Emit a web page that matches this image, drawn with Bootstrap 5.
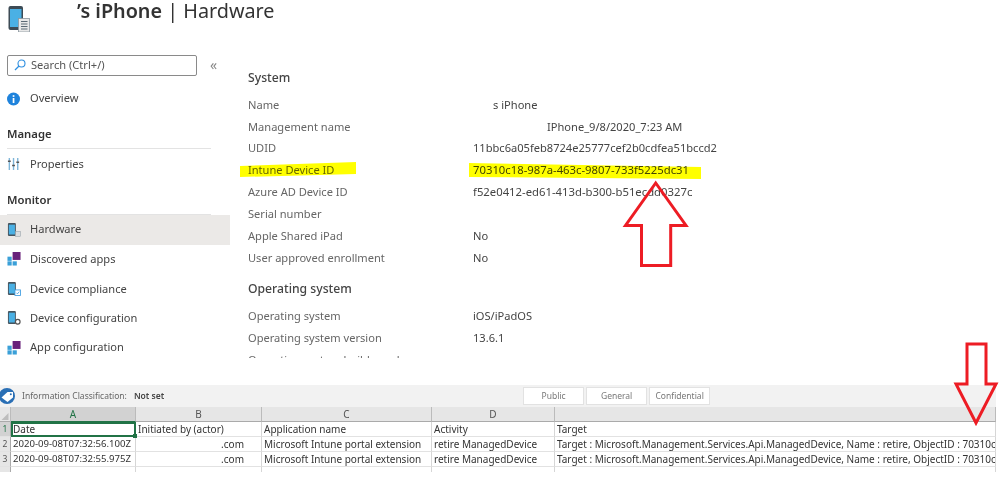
<!DOCTYPE html>
<html lang="en">
<head>
<meta charset="utf-8">
<title>iPhone | Hardware</title>
<link href="https://cdn.jsdelivr.net/npm/bootstrap@5.3.0/dist/css/bootstrap.min.css" rel="stylesheet">
<style>
html,body{height:485px;overflow:hidden;background:#fff}
body{font-family:"Noto Sans","Open Sans",sans-serif;color:#444;position:relative;width:1000px}
.portal{height:385px;overflow:hidden}
.page-head{height:48px;padding:0 0 0 8px;gap:47px}
.head-icon{flex:none;margin-top:6px}
.page-title{font-size:19.8px;line-height:21px;font-weight:400;color:#333;margin:0;white-space:nowrap}
.page-title b{font-weight:600}
.side{width:230px;flex:none}
.side-search{padding:0 7px;height:34px}
.search-field{width:190px;flex:none;height:21px;border:1px solid #8a8a8a;border-radius:2px;padding-left:6px;gap:5px;font-size:11.1px;color:#555}
.collapse-mark{font-size:14px;color:#888;margin-left:13px;line-height:14px}
.nav-entry{height:29.4px;padding-left:7px;gap:9px;font-size:11.1px;color:#444}
.nav-entry svg{flex:none;width:14px;height:14px}
.nav-entry.current{background:#ebe9e7;height:30px}
.entry-first{margin-top:2px}
.group-label{font-size:11.3px;font-weight:600;color:#333;margin:13px 0 0 7px;width:204px;border-bottom:1px solid #e3e3e3;line-height:16px;padding-bottom:6px}
.main-pane{padding-left:18px;padding-top:30px;height:319px;overflow:hidden;flex:1;margin-top:-9px}
.sect-title{font-size:12.2px;color:#444;margin:0 0 8px;line-height:17px}
.sect-next{margin-top:10.5px;margin-bottom:8.5px}
.prop-row{display:flex;height:21.9px;align-items:center;font-size:11.1px;color:#555;flex:none}
.prop-key{width:225px;flex:none;color:#666}
.prop-val{color:#444;white-space:nowrap}
.val-hash{font-size:11.3px}
.val-name{padding-left:20px}
.val-mgmt{padding-left:74px}
.sheet{height:100px}
.sheet-band{height:22px;background:#f2f2f2;width:996px;font-size:8.5px;color:#666}
.tag-dot{width:16px;height:16px;flex:none;margin-right:6px}
.band-value{font-weight:600;color:#444;margin-left:7px}
.band-btns{margin-left:359px;gap:2px}
.btn.class-btn{width:61px;height:18px;padding:0;border:1px solid #e2e2e2;border-radius:0;background:#fff;color:#777;font-size:8.5px;line-height:16px}
.cells{display:grid;grid-template-columns:11px 125px 126px 170px 123px 441px;grid-auto-rows:15px;width:996px;font-size:10px;color:#333;line-height:14px}
.cells>div{border-right:1px solid #d6d6d6;border-bottom:1px solid #e2e2e2;padding-left:2px;white-space:nowrap;overflow:hidden}
.cells>.hd{background:#e6e6e6;text-align:center;color:#555;border-bottom:1px solid #aaa;border-right-color:#bbb;padding:0}
.cells>.hd.sel{background:#d2d2d2;color:#217346;border-bottom:1px solid #217346}
.cells>.hd svg{display:block}
.cells>.rn{background:#e6e6e6;color:#555;padding:0;text-align:center;font-size:8.5px;border-right-color:#aaa}
.cells>.rn.sel{background:#d2d2d2;color:#217346}
.cells>.active{outline:2px solid #217346;outline-offset:-2px;position:relative;overflow:visible}
.cells>.active::after{content:"";position:absolute;right:-2px;bottom:-2px;width:4px;height:4px;background:#217346;border:0}
.cells>.stamp{font-size:9.6px}
.cells>.end-cell{text-align:right;padding-right:17px}
.cells>.stub{height:5px;border-bottom:0}
.marks{position:absolute;left:0;top:0;width:1000px;height:485px;pointer-events:none}
.marks.hilite{mix-blend-mode:multiply}
</style>
</head>
<body>
<svg width="0" height="0" class="d-block">
<defs>
<symbol id="ic-phone" viewBox="0 0 22 26">
<rect x="0.500" y="0" width="14.500" height="24" rx="2" fill="#3d4b55"/>
<rect x="2" y="3" width="11.500" height="18" fill="#4ab0e4"/>
<rect x="10.500" y="12.500" width="11" height="13.500" fill="#e8e8e8" stroke="#8a969e" stroke-width=".8"/>
<path d="M13 15.500h6.500M13 18h6.500M13 20.500h6.500M13 23h6.500" stroke="#5b6a75" stroke-width="1"/>
</symbol>
<symbol id="ic-apps" viewBox="0 0 15 15">
<rect x="6" y="0" width="8.500" height="8.500" fill="#68217a"/>
<rect x="0.500" y="5" width="4.500" height="4.500" fill="#3aa0d8"/>
<rect x="0.500" y="10" width="4.500" height="4.500" fill="#3aa0d8"/>
<rect x="6" y="10" width="4.500" height="4.500" fill="#3aa0d8"/>
</symbol>
<symbol id="ic-device" viewBox="0 0 15 15">
<rect x="1" y="0" width="8.500" height="14" rx="1.200" fill="#46545e"/>
<rect x="2" y="1.800" width="6.500" height="10.500" fill="#4ab0e4"/>
</symbol>
</defs>
</svg>

<div class="portal">
  <div class="d-flex page-head">
    <svg width="22" height="26" class="head-icon"><use href="#ic-phone"/></svg>
    <h1 class="page-title"><b>’s iPhone</b> | Hardware</h1>
  </div>
  <div class="d-flex">
    <nav class="side">
      <div class="d-flex align-items-center side-search">
        <div class="d-flex align-items-center search-field">
          <svg width="12" height="12" viewBox="0 0 12 12"><circle cx="7.500" cy="4.500" r="3.500" fill="none" stroke="#2f8fe0" stroke-width="1.100"/><path d="M5 7L1 11" stroke="#2f8fe0" stroke-width="1.300"/></svg>
          <span>Search (Ctrl+/)</span>
        </div>
        <span class="collapse-mark">«</span>
      </div>
      <div class="d-flex align-items-center nav-entry entry-first">
        <svg viewBox="0 0 14 14"><circle cx="6.500" cy="7" r="6.500" fill="#1f83dc"/><rect x="5.700" y="6" width="1.700" height="5" fill="#fff"/><rect x="5.700" y="3.200" width="1.700" height="1.700" fill="#fff"/></svg>
        <span>Overview</span>
      </div>
      <p class="group-label">Manage</p>
      <div class="d-flex align-items-center nav-entry">
        <svg viewBox="0 0 15 15"><path d="M2.500 1v13M7 1v13M11.500 1v13" stroke="#7fb5d8" stroke-width="1.500"/><path d="M1 4.500h3M5.500 9h3M10 5.500h3" stroke="#555" stroke-width="1.600"/></svg>
        <span>Properties</span>
      </div>
      <p class="group-label mb-0">Monitor</p>
      <div class="d-flex align-items-center nav-entry current">
        <svg viewBox="0 0 15 15"><use href="#ic-device"/><rect x="9" y="9" width="5.500" height="5.500" fill="#d8dde0" stroke="#8a969e" stroke-width=".5"/></svg>
        <span>Hardware</span>
      </div>
      <div class="d-flex align-items-center nav-entry">
        <svg viewBox="0 0 15 15"><use href="#ic-apps"/></svg>
        <span>Discovered apps</span>
      </div>
      <div class="d-flex align-items-center nav-entry">
        <svg viewBox="0 0 15 15"><use href="#ic-device"/><rect x="8.500" y="8.500" width="6" height="6" fill="#fff" stroke="#3a9be0" stroke-width=".9"/><path d="M10 11.500l1.200 1.200 2-2.400" fill="none" stroke="#3a9be0" stroke-width=".9"/></svg>
        <span>Device compliance</span>
      </div>
      <div class="d-flex align-items-center nav-entry">
        <svg viewBox="0 0 15 15"><use href="#ic-device"/><circle cx="11.500" cy="11.500" r="2.500" fill="#fff" stroke="#555" stroke-width="1.300"/></svg>
        <span>Device configuration</span>
      </div>
      <div class="d-flex align-items-center nav-entry">
        <svg viewBox="0 0 15 15"><use href="#ic-apps"/></svg>
        <span>App configuration</span>
      </div>
    </nav>
    <main class="main-pane">
      <h2 class="sect-title">System</h2>
      <div class="prop-row"><span class="prop-key">Name</span><span class="prop-val val-name">s iPhone</span></div>
      <div class="prop-row"><span class="prop-key">Management name</span><span class="prop-val val-mgmt">IPhone_9/8/2020_7:23 AM</span></div>
      <div class="prop-row"><span class="prop-key">UDID</span><span class="prop-val">11bbc6a05feb8724e25777cef2b0cdfea51bccd2</span></div>
      <div class="prop-row"><span class="prop-key">Intune Device ID</span><span class="prop-val val-hash">70310c18-987a-463c-9807-733f5225dc31</span></div>
      <div class="prop-row"><span class="prop-key">Azure AD Device ID</span><span class="prop-val val-hash">f52e0412-ed61-413d-b300-b51ecdd0327c</span></div>
      <div class="prop-row"><span class="prop-key">Serial number</span></div>
      <div class="prop-row"><span class="prop-key">Apple Shared iPad</span><span class="prop-val">No</span></div>
      <div class="prop-row"><span class="prop-key">User approved enrollment</span><span class="prop-val">No</span></div>
      <h2 class="sect-title sect-next">Operating system</h2>
      <div class="prop-row"><span class="prop-key">Operating system</span><span class="prop-val">iOS/iPadOS</span></div>
      <div class="prop-row"><span class="prop-key">Operating system version</span><span class="prop-val">13.6.1</span></div>
      <div class="prop-row"><span class="prop-key">Operating system build number</span></div>
    </main>
  </div>
</div>

<section class="sheet">
  <div class="d-flex align-items-center sheet-band">
    <svg class="tag-dot" viewBox="0 0 16 16"><circle cx="7" cy="8" r="8" fill="#2a6fb5"/><path d="M1.500 9.500L7.500 4H13v5.500L7.500 14z" fill="#fff"/><circle cx="10.800" cy="6.300" r="1" fill="#2a6fb5"/></svg>
    <span>Information Classification:</span><span class="band-value">Not set</span>
    <div class="d-flex band-btns">
      <button type="button" class="btn class-btn">Public</button>
      <button type="button" class="btn class-btn">General</button>
      <button type="button" class="btn class-btn">Confidential</button>
    </div>
  </div>
  <div class="cells">
    <div class="hd"><svg width="10" height="14" viewBox="0 0 10 14"><path d="M8.500 6v7h-7z" fill="#bdbdbd"/></svg></div><div class="hd sel">A</div><div class="hd">B</div><div class="hd">C</div><div class="hd">D</div><div class="hd"></div>
    <div class="rn sel">1</div><div class="active">Date</div><div>Initiated by (actor)</div><div>Application name</div><div>Activity</div><div>Target</div>
    <div class="rn">2</div><div class="stamp">2020-09-08T07:32:56.100Z</div><div class="end-cell">.com</div><div>Microsoft Intune portal extension</div><div>retire ManagedDevice</div><div>Target : Microsoft.Management.Services.Api.ManagedDevice, Name : retire, ObjectID : 70310c18-987a</div>
    <div class="rn">3</div><div class="stamp">2020-09-08T07:32:55.975Z</div><div class="end-cell">.com</div><div>Microsoft Intune portal extension</div><div>retire ManagedDevice</div><div>Target : Microsoft.Management.Services.Api.ManagedDevice, Name : retire, ObjectID : 70310c18-987a</div>
    <div class="rn stub"></div><div class="stub"></div><div class="stub"></div><div class="stub"></div><div class="stub"></div><div class="stub"></div>
  </div>
</section>

<svg class="marks hilite" viewBox="0 0 1000 485">
  <path d="M240 166L356 162L356 174L240 177Z" fill="#ffff00"/>
  <path d="M469 163L701 167L701 179L469 177Z" fill="#ffff00"/>
</svg>
<svg class="marks" viewBox="0 0 1000 485">
  <path d="M655.700 183L625.500 225.500H641.500V265.500H670.700V225.500H686Z" fill="none" stroke="#ed1c24" stroke-width="3"/>
  <path d="M967 344V384H956L976 423L996 384H986V344Z" fill="none" stroke="#ed1c24" stroke-width="3"/>
</svg>
<script src="https://cdn.jsdelivr.net/npm/bootstrap@5.3.0/dist/js/bootstrap.bundle.min.js"></script>
</body>
</html>
